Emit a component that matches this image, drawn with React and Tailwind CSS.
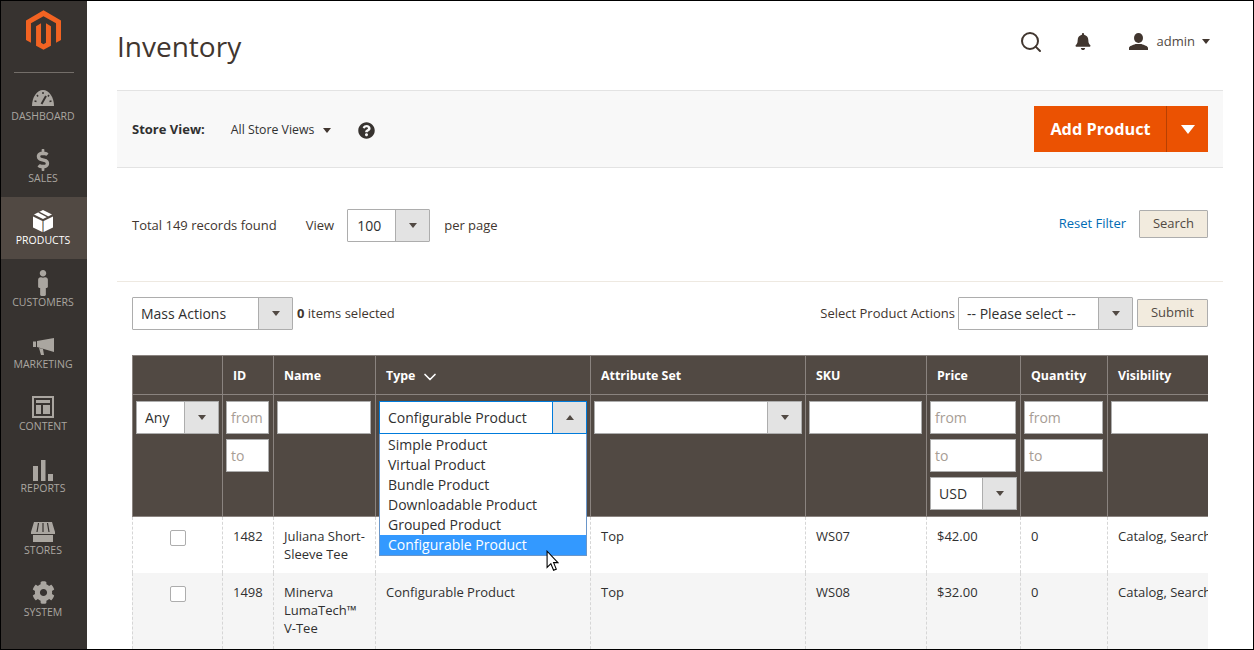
import { FaDollarSign, FaMale, FaCog, FaBell, FaQuestionCircle } from 'react-icons/fa';
import { FiSearch, FiChevronDown } from 'react-icons/fi';

const font = { fontFamily: '"Open Sans", sans-serif' };

function Logo() {
  return (
    <svg viewBox="0 0 24 27" className="w-[35px] h-[40px]">
      <path fill="#f26322" d="M12 0 0 6.9v13.4l3.4 2V8.9L12 4l8.6 4.9v13.4l3.4-2V6.9z" />
      <path fill="#f26322" d="M13.7 22.3 12 23.3l-1.7-1V8.9L6.9 10.900v13.400L12 27l5.100-2.700V10.900l-3.400-2z" />
    </svg>
  );
}

function Gauge() {
  return (
    <svg viewBox="0 0 22 16" className="w-[22px] h-[16px]">
      <path fill="#aaa6a0" d="M0 16C0 7 5 0 11 0s11 7 11 16z" />
      <path stroke="#373330" strokeWidth="1.500" d="M11 2v2M5 5l1 1.500M17 5l-1 1.500M2.500 11l2 .5M19.500 11l-2 .5" />
      <path stroke="#373330" strokeWidth="2" d="M9.500 14 14 6" />
    </svg>
  );
}

function BoxIcon() {
  return (
    <svg viewBox="0 0 20 22" className="w-[20px] h-[22px]">
      <path fill="#fff" d="M10 0 19 4.500 10 9 1 4.500z" />
      <path fill="#fff" d="M0 6.500 9.300 11v11L0 17.500z" />
      <path fill="#fff" d="M20 6.500 10.700 11v11l9.300-4.500z" />
      <path fill="#514943" d="m5 2.500 9 4.700 1.500-.8-9-4.600z" />
      <path fill="#e8a868" d="M9.300 11h.7v11h-.7z" />
      <path fill="#7ab0e0" d="M10 11h.7v11H10z" />
    </svg>
  );
}

function MarketingIcon() {
  return (
    <svg viewBox="0 0 21 17" className="w-[21px] h-[17px]">
      <path fill="#aaa6a0" d="M0 3.500h3V9H0zM4 3l17-3v14L4 9zM6 10l4 1 1 6H8z" />
    </svg>
  );
}

function ContentIcon() {
  return (
    <svg viewBox="0 0 22 22" className="w-[22px] h-[22px]">
      <path fill="#aaa6a0" fillRule="evenodd" d="M0 0h22v22H0zM2 2v18h18V2z" />
      <path fill="#aaa6a0" d="M4 4h14v3H4zM4 9h5v9H4zM11 9h7v9h-7z" />
    </svg>
  );
}

function ReportsIcon() {
  return (
    <svg viewBox="0 0 20 21" className="w-[20px] h-[21px]">
      <path fill="#aaa6a0" d="M0 6h5v15H0zM8 0h4.500v21H8zM15 14h5v7h-5z" />
    </svg>
  );
}

function StoresIcon() {
  return (
    <svg viewBox="0 0 24 20" className="w-[24px] h-[20px]">
      <path fill="#aaa6a0" d="M3 0h18l3 10v2H0v-2zM2 13h20v7H2z" />
      <path stroke="#373330" strokeWidth="1.200" d="M7.500 1 6 10M12 1v9M16.500 1 18 10" />
    </svg>
  );
}

function UserIcon() {
  return (
    <svg viewBox="0 0 19 17" className="w-[19px] h-[17px]">
      <ellipse fill="#41362f" cx="9.500" cy="5" rx="4.500" ry="5" />
      <path fill="#41362f" d="M0 17v-2c0-2 4-3 6.500-4h6c2.500 1 6.500 2 6.500 4v2z" />
    </svg>
  );
}

const navItems = [
  { label: 'DASHBOARD', icon: <Gauge /> },
  { label: 'SALES', icon: <FaDollarSign className="w-[22px] h-[22px] text-[#aaa6a0]" /> },
  { label: 'PRODUCTS', icon: <div className="-mt-[2px] flex"><BoxIcon /></div>, active: true },
  { label: 'CUSTOMERS', icon: <div className="-mt-[3px] flex"><FaMale className="w-[26px] h-[26px] text-[#aaa6a0]" /></div> },
  { label: 'MARKETING', icon: <MarketingIcon /> },
  { label: 'CONTENT', icon: <div className="-mt-[3px] flex"><ContentIcon /></div> },
  { label: 'REPORTS', icon: <ReportsIcon /> },
  { label: 'STORES', icon: <StoresIcon /> },
  { label: 'SYSTEM', icon: <div className="-mt-[3px] flex"><FaCog className="w-[23px] h-[23px] text-[#aaa6a0]" /></div> },
];

function Sidebar() {
  return (
    <aside className="w-[86px] shrink-0 bg-[#373330] flex flex-col">
      <div className="h-[72px] mx-[13px] border-b border-[#736e69] flex justify-center pt-[9px] pr-[2px]">
        <Logo />
      </div>
      {navItems.map(({ label, icon, active }) => (
        <div
          key={label}
          className={`h-[62px] shrink-0 flex flex-col items-center pt-[13px] pr-[2px] ${active ? 'bg-[#514943] text-white' : 'text-[#aaa6a0]'}`}
        >
          <div className="h-[24px] flex items-center justify-center">{icon}</div>
          <span className="text-[10.5px] leading-[14px] -mt-[1px]">{label}</span>
        </div>
      ))}
    </aside>
  );
}

function Caret({ up, className = 'border-[#514943]' }) {
  return up ? (
    <span className={`w-0 h-0 border-x-[4.5px] border-x-transparent border-b-[5px] ${className}`} />
  ) : (
    <span className={`w-0 h-0 border-x-[4.5px] border-x-transparent border-t-[5px] ${className}`} />
  );
}

function Select({ value, text = 'text-[14px]', pad = 'pl-2', arrow = 'w-[34px]', className = '', up = false, frame = 'border-[#adadad]' }) {
  return (
    <div className={`flex h-[33px] bg-white border ${frame} ${className}`}>
      <div className={`flex-1 min-w-0 flex items-center whitespace-nowrap text-[#303030] ${text} ${pad}`}>{value}</div>
      <div className={`${arrow} shrink-0 bg-[#e3e3e3] border-l ${frame} flex items-center justify-center`}>
        <Caret up={up} />
      </div>
    </div>
  );
}

function Input({ placeholder }) {
  return (
    <div className="h-[33px] w-[calc(100%-1px)] bg-white border border-[#adadad] flex items-center pl-1 text-[14px] text-[#a79d95] overflow-hidden">
      {placeholder}
    </div>
  );
}

function Btn({ children, className = '' }) {
  return (
    <button className={`h-[28px] bg-[#f2ebde] border border-[#adadad] rounded-[1px] text-[13px] text-[#514943] ${className}`}>
      {children}
    </button>
  );
}

const columns = [
  { label: '', w: 'w-[90px]' },
  { label: 'ID', w: 'w-[51px]' },
  { label: 'Name', w: 'w-[102px]' },
  { label: 'Type', w: 'w-[215px]', sort: true },
  { label: 'Attribute Set', w: 'w-[215px]' },
  { label: 'SKU', w: 'w-[121px]' },
  { label: 'Price', w: 'w-[94px]' },
  { label: 'Quantity', w: 'w-[87px]' },
  { label: 'Visibility', w: 'w-[130px]' },
];

const rows = [
  { id: '1482', name: ['Juliana Short-', 'Sleeve Tee'], type: '', set: 'Top', sku: 'WS07', price: '$42.00', qty: '0', h: 'h-[56px]' },
  { id: '1498', name: ['Minerva', 'LumaTech™', 'V-Tee'], type: 'Configurable Product', set: 'Top', sku: 'WS08', price: '$32.00', qty: '0', h: 'h-[76px]', bg: 'bg-[#f5f5f5]' },
];

const options = ['Simple Product', 'Virtual Product', 'Bundle Product', 'Downloadable Product', 'Grouped Product'];

function TypeFilter() {
  return (
    <div className="relative">
      <Select value="Configurable Product" pad="pl-2" up frame="border-[#007bdb]" />
      <div className="absolute left-0 right-0 top-[33px] z-10 bg-white border-x border-b border-[#6a96c9] text-[14px] leading-[20px] text-[#303030] pt-px">
        {options.map((o) => (
          <div key={o} className="pl-2 h-[20px]">{o}</div>
        ))}
        <div className="pl-2 h-[20px] bg-[#3399ff] text-white">Configurable Product</div>
      </div>
      <svg viewBox="0 0 12 20" className="absolute left-[167px] top-[149px] z-20 w-[13px] h-[22px]">
        <path fill="#fff" stroke="#000" strokeWidth="1" d="M1 1v15l3.500-3.500 2.500 6 2.500-1-2.500-6H11z" />
      </svg>
    </div>
  );
}

function Grid() {
  const th = 'h-[40px] border-l border-t border-b border-[#8a837f] pl-[10px] pt-[3px] text-left font-bold text-white text-[12.4px] align-middle';
  const fc = 'border-l border-b border-[#8a837f] pt-[6px] px-[3px] align-top';
  const td = 'border-l border-dashed border-[#d6d6d6] pl-[10px] pt-[10px] align-top leading-[18px]';
  return (
    <div className="mx-[15px] mt-[25px] overflow-hidden">
      <table className="table-fixed w-[1105px] border-separate border-spacing-0 text-[13px] text-[#303030]">
        <colgroup>
          {columns.map((c) => (
            <col key={c.label} className={c.w} />
          ))}
        </colgroup>
        <thead>
          <tr className="bg-[#514943]">
            {columns.map((c) => (
              <th key={c.label} className={th}>
                <span className="inline-flex items-center gap-[5px]">
                  {c.label}
                  {c.sort && <FiChevronDown className="w-[20px] h-[20px]" />}
                </span>
              </th>
            ))}
          </tr>
          <tr className="bg-[#514943] h-[122px]">
            <td className={fc}>
              <Select value="Any" />
            </td>
            <td className={fc}>
              <div className="flex flex-col gap-[5px]">
                <Input placeholder="from" />
                <Input placeholder="to" />
              </div>
            </td>
            <td className={fc}>
              <Input />
            </td>
            <td className={fc}>
              <TypeFilter />
            </td>
            <td className={fc}>
              <Select value="" />
            </td>
            <td className={fc}>
              <Input />
            </td>
            <td className={fc}>
              <div className="flex flex-col gap-[5px]">
                <Input placeholder="from" />
                <Input placeholder="to" />
                <Select value="USD" />
              </div>
            </td>
            <td className={fc}>
              <div className="flex flex-col gap-[5px]">
                <Input placeholder="from" />
                <Input placeholder="to" />
              </div>
            </td>
            <td className={fc}>
              <Input />
            </td>
          </tr>
        </thead>
        <tbody>
          {rows.map((r) => (
            <tr key={r.id} className={`${r.h} ${r.bg || 'bg-white'}`}>
              <td className="align-top pt-[13px] border-l border-dashed border-[#d6d6d6]">
                <div className="w-4 h-4 mx-auto bg-white border border-[#adadad] rounded-[2px]" />
              </td>
              <td className={td}>{r.id}</td>
              <td className={td}>
                {r.name.map((n) => (
                  <div key={n}>{n}</div>
                ))}
              </td>
              <td className={td}>{r.type}</td>
              <td className={td}>{r.set}</td>
              <td className={td}>{r.sku}</td>
              <td className={td}>{r.price}</td>
              <td className={td}>{r.qty}</td>
              <td className={`${td} whitespace-nowrap`}>Catalog, Search</td>
            </tr>
          ))}
        </tbody>
      </table>
    </div>
  );
}

export default function App() {
  return (
    <div className="w-[1254px] h-[650px] border border-black overflow-hidden flex bg-white" style={font}>
      <Sidebar />
      <main className="flex-1 min-w-0 px-[30px]">
        {/* Page header */}
        <header className="h-[89px] flex items-center justify-between">
          <h1 className="text-[28px] text-[#41362f] font-normal">Inventory</h1>
          <div className="flex items-center mr-[13px] mb-[8px] text-[#41362f]">
            <FiSearch className="w-[24px] h-[24px] stroke-[2px]" />
            <FaBell className="w-[16px] h-[17px] ml-[32px]" />
            <div className="ml-[38px] flex"><UserIcon /></div>
            <span className="text-[13px] text-[#514943] ml-[9px] mr-[7px]">admin</span>
            <Caret className="border-[#41362f]" />
          </div>
        </header>

        {/* Store view toolbar */}
        <div className="h-[78px] bg-[#f8f8f8] border-y border-[#e3e3e3] flex items-center justify-between px-[15px]">
          <div className="flex items-center text-[#303030] pt-[2px]">
            <span className="text-[13px] font-bold">Store View:</span>
            <span className="text-[12.3px] ml-[26px]">All Store Views</span>
            <Caret className="border-[#41362f] ml-[9px]" />
            <FaQuestionCircle className="w-[17px] h-[17px] text-[#373330] ml-[27px]" />
          </div>
          <div className="flex h-[46px] bg-[#eb5202] text-white">
            <div className="w-[133px] flex items-center justify-center pl-px text-[16.3px] font-bold border-r border-[#b84002]">Add Product</div>
            <div className="w-[41px] flex items-center justify-center">
              <span className="w-0 h-0 border-x-[7px] border-x-transparent border-t-[9px] border-t-white" />
            </div>
          </div>
        </div>

        {/* Record count and paging */}
        <div className="h-[114px] border-b border-[#eee9e1] flex items-start justify-between px-[15px] pt-[41px] text-[13px] text-[#41362f]">
          <div className="flex items-center">
            <span>Total 149 records found</span>
            <span className="ml-[29px]">View</span>
            <Select value="100" pad="pl-[9px]" className="w-[83px] ml-[13px] rounded-[1px]" />
            <span className="ml-[14px]">per page</span>
          </div>
          <div className="flex items-start">
            <a className="text-[#006bb4] mr-[13px] mt-[5px]">Reset Filter</a>
            <Btn className="w-[69px] mt-px">Search</Btn>
          </div>
        </div>

        {/* Mass actions */}
        <div className="flex items-center justify-between px-[15px] pt-[15px] text-[13px] text-[#41362f]">
          <div className="flex items-center">
            <Select value="Mass Actions" className="w-[161px] rounded-[1px]" />
            <span className="ml-[4px] mt-[1px]"><b>0</b> items selected</span>
          </div>
          <div className="flex items-center">
            <span className="mr-[3px] mt-[1px]">Select Product Actions</span>
            <Select value="-- Please select --" className="w-[175px] rounded-[1px]" />
            <Btn className="w-[71px] ml-[4px] -mt-[2px]">Submit</Btn>
          </div>
        </div>

        <Grid />
      </main>
    </div>
  );
}
